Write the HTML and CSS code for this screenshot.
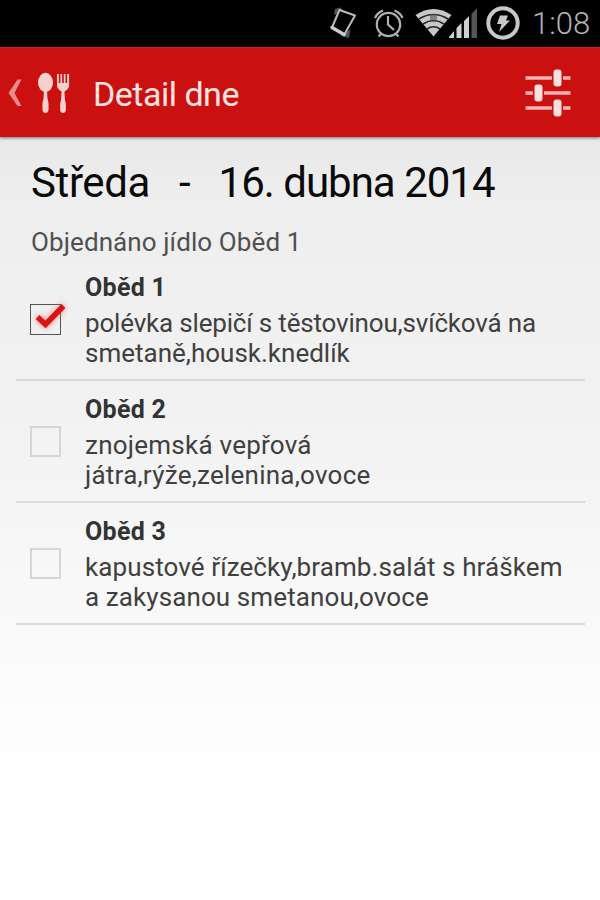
FILE: index.html
```html
<!DOCTYPE html>
<html lang="cs">

<head>
   <meta charset="UTF-8">
   <meta name="viewport" content="width=device-width, initial-scale=1.0">
   <title>Detail dne</title>
   <link rel="stylesheet" href="styles.css">
</head>

<body>
   <div class="status-bar">
      <svg class="status-icons" width="160" height="47" viewBox="0 0 160 47">
         <!-- vibrate -->
         <path d="M14 15l1-6 5-1.500 3 3zM21 36l8 2 1.500-9z" fill="#555" />
         <path d="M19.500 10L35 15.500L24 35L12 27.500Z" fill="#000" stroke="#bbb" stroke-width="2" stroke-linejoin="round" />
         <path d="M12 27.500L24 34.500" stroke="#ccc" stroke-width="3.500" stroke-linecap="round" />
         <!-- alarm -->
         <g fill="none" stroke="#b0b0b0" stroke-width="2.200">
            <circle cx="68.500" cy="24.500" r="11.700" />
            <path d="M68 16v8.500l6 5.500M55 18q2-5 8-7.500M74.500 10.500q6 2.500 8 7.500M61 34l-2.500 2.500M76 34l2.500 2.500" />
         </g>
         <!-- wifi -->
         <path d="M95.500 15Q113.500 3 131.500 15L113.500 36.500Z" fill="#c8c8c8" />
         <path d="M99 19q14.500-9 29 0M103 24q10.500-7 21 0M107 29q6.500-4.500 13 0" fill="none" stroke="#222" stroke-width="1.600" />
         <path d="M110 14h7v8h-7z" fill="#555" opacity=".6" />
         <!-- signal -->
         <path d="M129 38v-1l5-6v7zM136.500 38V28l5-5v15zM144 38V21l5-5v22z" fill="#d0d0d0" />
         <path d="M151.500 38V14l5.500-6v30z" fill="#555" />
      </svg>
      <svg class="battery" width="36" height="47" viewBox="0 0 36 47">
         <circle cx="18" cy="23" r="14.700" fill="none" stroke="#c8c8c8" stroke-width="4" />
         <path d="M15 15.500h8l-2 5h4L14 32l2.500-8H12z" fill="#c8c8c8" />
      </svg>
      <span class="clock">1:08</span>
   </div>

   <div class="action-bar">
      <svg class="back" width="14" height="28" viewBox="0 0 14 28">
         <path d="M9.500 .500h4L6.500 14l7 13h-4L.500 14z" fill="#e88a8a" />
      </svg>
      <svg class="logo" width="34" height="42" viewBox="0 0 34 42">
         <g fill="#f6cfcf">
            <ellipse cx="8.500" cy="10.500" rx="7.500" ry="9.700" />
            <path d="M7 17h3l.5 10q1.500 3 1 11q-.5 3-3 3t-3-3q-.5-8 1-11z" />
            <path d="M20 2h1.800v9h1.600V2h1.700v9h1.700V2h1.700v9h1.600V2h2v12q-.5 3-4.600 5.500l.4 8q1.500 4 1 10.500q-.5 3-2.900 3t-2.900-3q-.5-6.500 1-10.500l.4-8Q20.500 17 20 14z" />
         </g>
      </svg>
      <h1 class="title">Detail dne</h1>
      <svg class="settings" width="46" height="48" viewBox="0 0 46 48">
         <path d="M.5 9H27M38 9h7.500M.5 24H8M19 24h26.500M.5 39H27M38 39h7.500" stroke="#f1b5b5" stroke-width="3.600" />
         <g fill="#fbe0e0">
            <rect x="28.500" y="0.500" width="8" height="17" rx="3" />
            <rect x="9.500" y="15.500" width="8" height="17" rx="3" />
            <rect x="28.500" y="30.500" width="8" height="17" rx="3" />
         </g>
      </svg>
   </div>

   <div class="content">
      <h2 class="date"><span class="day">Středa</span><span class="dash">-</span><span class="full">16. dubna 2014</span></h2>
      <p class="ordered">Objednáno jídlo Oběd 1</p>

      <div class="meals">
         <div class="meal">
            <div class="checkbox checked">
               <svg class="tick" width="38" height="38" viewBox="0 0 38 38">
                  <path d="M7.500 17L15.500 24.500L33.500 6" />
               </svg>
            </div>
            <div class="info">
               <h3>Oběd 1</h3>
               <p class="tight">polévka slepičí s těstovinou,svíčková na</p>
               <p class="normal">smetaně,housk.knedlík</p>
            </div>
         </div>
         <div class="meal">
            <div class="checkbox"></div>
            <div class="info">
               <h3>Oběd 2</h3>
               <p class="wide">znojemská vepřová</p>
               <p class="wide">játra,rýže,zelenina,ovoce</p>
            </div>
         </div>
         <div class="meal">
            <div class="checkbox"></div>
            <div class="info">
               <h3>Oběd 3</h3>
               <p>kapustové řízečky,bramb.salát s hráškem</p>
               <p>a zakysanou smetanou,ovoce</p>
            </div>
         </div>
      </div>
   </div>
</body>

</html>
```
FILE: styles.css
```css
* {
   margin: 0;
   padding: 0;
   box-sizing: border-box;
   font-family: Roboto, "Noto Sans", sans-serif;
}

body {
   height: 900px;
   overflow: hidden;
   background: linear-gradient(#e8e8e8 137px, #eeeeee 200px, #f3f3f3 450px, #ffffff 780px);
}

h1,
h2 {
   font-weight: 400;
}

.status-bar {
   height: 47px;
   background-color: #000;
   display: flex;
   align-items: center;
   justify-content: flex-end;
   padding-right: 11px;
}

.status-icons {
   margin-right: 5px;
}

.battery {
   margin-right: 11px;
}

.clock {
   color: #b4b4b4;
   font-size: 31px;
   font-weight: 300;
   width: 57px;
   white-space: nowrap;
}

.action-bar {
   height: 90px;
   background-color: #cb1010;
   display: flex;
   align-items: center;
   padding: 0 29px 0 8px;
   border-top: 1px solid #d92020;
   box-shadow: 0 1px 3px rgba(0, 0, 0, 0.5);
}

.logo {
   margin-left: 15px;
}

.title {
   color: #fbe3e3;
   font-size: 34px;
   letter-spacing: -0.5px;
   margin-left: 22px;
   margin-top: 2px;
}

.settings {
   margin-left: auto;
}

.content {
   padding: 16px 15px 0 16px;
}

.date {
   display: flex;
   height: 60px;
   line-height: 60px;
   padding-left: 15px;
   font-size: 42px;
   color: #0a0a0a;
}

.day {
   letter-spacing: -0.4px;
}

.dash {
   margin: 0 28px 0 29px;
}

.full {
   letter-spacing: -1px;
}

.ordered {
   margin-top: 14px;
   padding-left: 15px;
   font-size: 26px;
   line-height: 30px;
   letter-spacing: 0.1px;
   color: #505050;
}

.meals {
   margin-top: 2px;
}

.meal {
   display: flex;
   align-items: center;
   height: 122px;
   padding-left: 14px;
   border-bottom: 2px solid #dadada;
}

.checkbox {
   position: relative;
   width: 31px;
   height: 31px;
   border: 2px solid #d6d6d6;
}

.checked {
   border: 1px solid #555;
}

.tick {
   position: absolute;
   left: -1px;
   top: -5px;
   fill: none;
   stroke: #d81414;
   stroke-width: 5.5;
   filter: drop-shadow(0 0 3px rgba(255, 60, 60, 0.6));
}

.info {
   margin-left: 24px;
   color: #404040;
   font-size: 26px;
   line-height: 30px;
   letter-spacing: 0.1px;
   white-space: nowrap;
}

.info h3 {
   font-size: 25px;
   line-height: 36px;
   letter-spacing: 0.3px;
   margin-bottom: 2px;
   color: #333;
}

.info .normal {
   letter-spacing: 0;
}

.info .tight {
   letter-spacing: -0.18px;
}

.info .wide {
   letter-spacing: 0.24px;
}
```
